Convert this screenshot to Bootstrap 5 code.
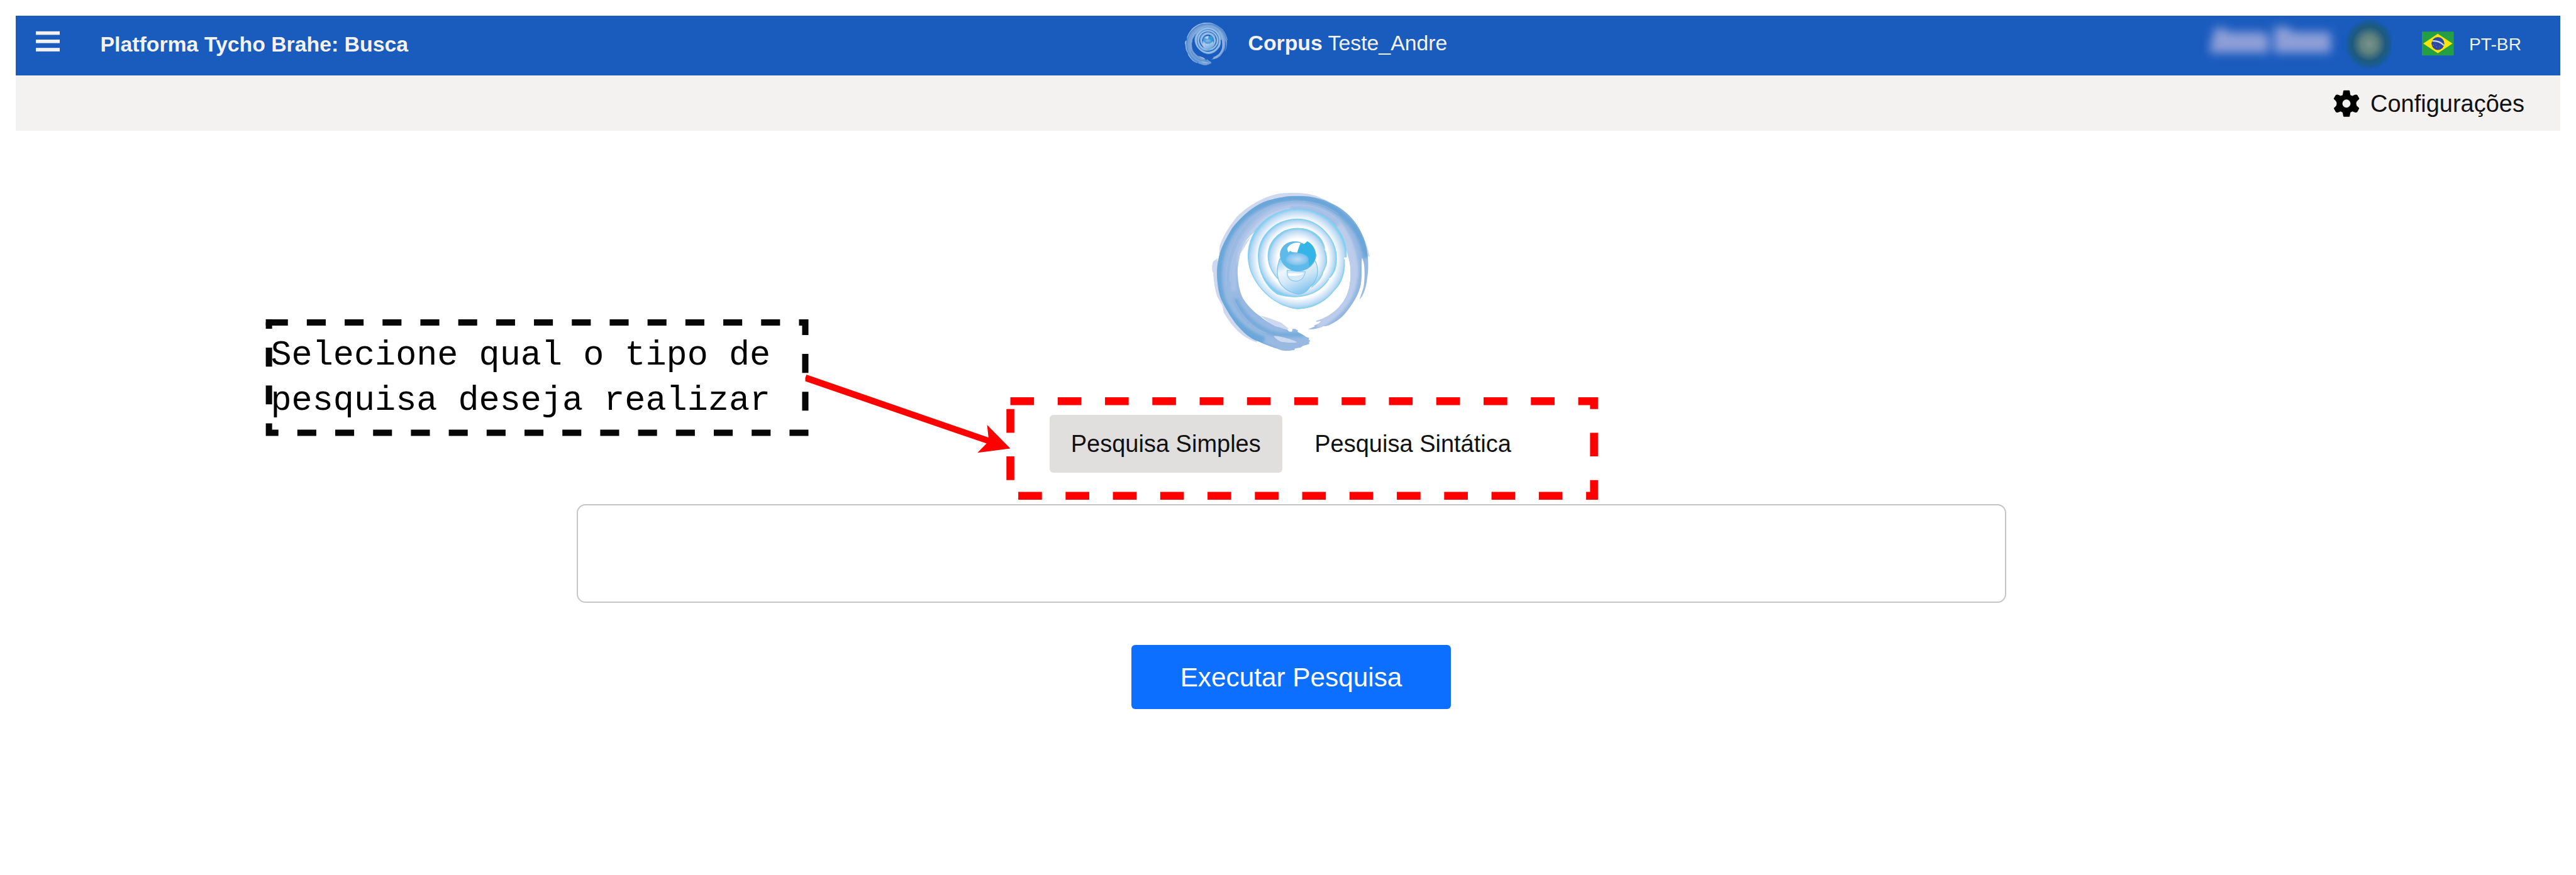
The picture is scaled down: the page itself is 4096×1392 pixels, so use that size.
<!DOCTYPE html>
<html lang="pt-BR">
<head>
<meta charset="utf-8">
<title>Platforma Tycho Brahe: Busca</title>
<link href="https://cdn.jsdelivr.net/npm/bootstrap@5.3.0/dist/css/bootstrap.min.css" rel="stylesheet">
<script src="https://cdn.jsdelivr.net/npm/bootstrap@5.3.0/dist/js/bootstrap.bundle.min.js"></script>
<style>
body{width:4096px;height:1392px;overflow:hidden;font-family:"Liberation Sans",sans-serif;font-size:33.8px;color:#111;background:#fff}
.app-shell{padding:25px 25px 0}
.top-bar{height:95px;background:#1a5bbe;color:#f3f2f1;line-height:40px;padding:0 58px 0 32px}
.top-bar>*{flex-shrink:0}
.menu-icon{width:38px;height:34px;margin-top:-14px}
.brand-title{margin-left:64.5px;margin-top:-5px;width:1720px}
.corpus-group{margin-left:4px}
.corpus-logo{width:68px;height:68px;margin-top:-6px}
.corpus-name{margin-left:33px;margin-top:-9px}
.user-blur{width:360px;height:95px}
.flag-icon{width:50.7px;height:38.5px;margin-left:48px;margin-top:-6px}
.lang-code{font-size:28.2px;margin-left:24px;margin-top:-5px;width:87px}
.sub-bar{height:88.4px;background:#f3f2f1;font-size:38px;line-height:44px;padding:1px 57px 0 0;color:#111}
.gear-icon{width:42px;height:43.5px;margin-right:17px}
.search-main{padding:97.8px 0 0 10px}
.main-logo{width:251.5px;height:253px}
.type-tabs{margin-top:101.3px;height:91.4px;width:768.5px;font-size:38px}
.type-tab{border:0;border-radius:6px;background:transparent;color:#111;padding:0 34.5px 1px;line-height:88px;font-size:38px;white-space:nowrap;flex-shrink:0}
.type-tab.active{background:#e1dfdd;width:370px;padding-left:0;padding-right:0}
.query-box{width:2273px;height:156.4px;margin-top:50.6px;border:2px solid #c8c6c4;border-radius:14px;padding:20px;font-size:38px}
.run-btn{width:507.5px;height:102px;margin-top:67.6px;border-radius:6px;background:#0d6fff;border:0;font-size:42.3px;padding:0}
/* overlay with the tutorial annotations */
.note-layer{left:0;top:0;width:4096px;height:1392px}
.note-text{left:430.5px;top:529.5px;font-family:"Liberation Mono",monospace;font-size:55.18px;line-height:72.6px;color:#000;white-space:pre}
</style>
</head>
<body class="position-relative">
<svg width="0" height="0" class="position-absolute">
<defs>
<filter id="soft" x="-20%" y="-20%" width="140%" height="140%"><feGaussianBlur stdDeviation="9"/></filter>
<filter id="soft2" x="-20%" y="-20%" width="140%" height="140%"><feGaussianBlur stdDeviation="3"/></filter>
<radialGradient id="ring"><stop offset=".79" stop-color="#dcebf9" stop-opacity="0"/><stop offset=".87" stop-color="#dcebf9"/><stop offset=".95" stop-color="#b8d8f2"/><stop offset="1" stop-color="#84cdef"/></radialGradient>
<radialGradient id="ring3"><stop offset=".66" stop-color="#dcebf9" stop-opacity="0"/><stop offset=".8" stop-color="#dcebf9"/><stop offset=".93" stop-color="#b8d8f2"/><stop offset="1" stop-color="#7fcbef"/></radialGradient>
<linearGradient id="egg" x1="0" y1="0" x2=".5" y2="1"><stop offset="0" stop-color="#8cc8ef"/><stop offset=".35" stop-color="#eef6fd"/><stop offset=".65" stop-color="#cfe5f7"/><stop offset="1" stop-color="#85c7ee"/></linearGradient>
<radialGradient id="glow"><stop offset="0" stop-color="#bcdcf5"/><stop offset=".8" stop-color="#85c5ee"/><stop offset="1" stop-color="#6dbdea"/></radialGradient>
<clipPath id="brush"><path d="M800 170 C740 168 620 190 560 215 C450 262 370 350 320 410 C280 475 230 560 213 640 C200 690 196 760 200 800 C205 860 213 930 240 980 C270 1040 300 1090 345 1150 C400 1215 450 1260 520 1285 C580 1315 640 1332 690 1350 C720 1358 760 1354 790 1350 L795 1338 L840 1330 L855 1318 L905 1303 L903 1287 L913 1280 L900 1270 L905 1257 L880 1248 L862 1236 L815 1210 L818 1200 L795 1187 L777 1188 L772 1209 L750 1208 L735 1190 L712 1186 L640 1165 C600 1140 560 1120 530 1090 C480 1060 440 1015 415 980 C375 930 360 840 358 780 C350 700 370 610 410 530 C440 480 470 460 500 430 C570 330 680 270 815 270 C940 275 1050 330 1110 410 C1160 470 1190 580 1205 640 C1230 720 1225 850 1195 920 C1160 1010 1080 1090 960 1125 L957 1132 L996 1128 L975 1148 L940 1162 L948 1170 L895 1190 C940 1192 990 1180 1010 1167 L1030 1167 C1090 1150 1150 1105 1175 1075 C1230 1010 1290 920 1300 840 C1310 780 1300 700 1308 642 C1335 690 1330 800 1320 870 L1290 962 C1320 930 1340 870 1348 800 C1360 720 1358 670 1348 600 C1340 530 1310 460 1280 410 C1240 340 1180 285 1120 250 C1030 195 920 165 800 170Z"/></clipPath>
<symbol id="tycho" viewBox="160 145 1210 1212">
<g fill="#ced9ef" filter="url(#soft2)">
<path d="M690 150 C800 140 900 150 960 170 L1060 215 L940 190 L620 190 L520 245 C400 330 330 400 280 480 L215 620 L220 550 C260 440 320 370 350 330 C450 230 580 165 690 150Z"/>
<path d="M205 645 L170 670 C158 700 158 740 170 760 C175 820 180 880 200 940 L240 1010 L250 1060 C330 1200 410 1260 505 1292 L500 1270 C330 1150 230 980 205 800Z"/>
<path d="M1180 290 C1280 380 1340 500 1368 635 L1345 630 L1300 480Z"/>
<path d="M605 1107 L690 1140 L750 1188 L690 1184 L630 1160 L580 1125 L530 1085Z"/>
<path d="M410 530 L460 475 L375 620 L358 720 L345 700Z"/>
</g>
<g clip-path="url(#brush)">
<rect x="160" y="140" width="1210" height="1220" fill="#98b9e2"/>
<g fill="none" filter="url(#soft)">
<path d="M330 900 C300 600 420 400 600 290 C800 200 1020 260 1120 370 C1230 500 1260 640 1265 780" stroke="#a8c1e7" stroke-width="45"/>
<path d="M375 700 C370 590 420 480 540 370 C620 300 700 285 760 275" stroke="#c1d0ec" stroke-width="36"/>
<path d="M1120 400 C1200 500 1240 640 1240 780 C1230 930 1150 1060 960 1160" stroke="#bccdeb" stroke-width="75"/>
<path d="M640 1360 C330 1260 205 1000 212 760 C215 500 400 200 790 183 C1040 180 1240 340 1310 520 L1345 640" stroke="#69a6d8" stroke-width="50"/>
<path d="M1310 600 C1310 880 1230 1040 1040 1165" stroke="#86b0de" stroke-width="14"/>
<path d="M340 960 C390 1080 500 1180 620 1220 C700 1250 800 1220 860 1235" stroke="#76abda" stroke-width="36"/>
<path d="M230 940 C290 1090 400 1220 560 1270" stroke="#6ba8d9" stroke-width="46"/>
<path d="M420 1000 C480 1080 560 1150 650 1180" stroke="#96b8e2" stroke-width="22"/>
</g>
<g fill="none" filter="url(#soft2)" stroke-width="4" opacity=".45">
<path d="M300 820 C290 600 420 380 640 270 C820 215 980 235 1110 340 C1220 450 1270 590 1280 800" stroke="#c4d5ef"/>
<path d="M270 860 C250 580 390 340 620 240 C820 180 1000 210 1130 310" stroke="#b9cdec"/>
<path d="M330 970 C400 1110 480 1190 580 1220" stroke="#c4d5ef"/>
</g>
</g>
<path d="M632 1242 C680 1240 760 1262 815 1290 C770 1298 730 1290 690 1286 Q650 1270 632 1242Z" fill="#cad9ef" filter="url(#soft2)"/>
<path d="M815 270 C1000 270 1175 420 1190 590 L1184 640 L1170 642 L1178 700 C1175 780 1140 850 1100 885 C1040 970 940 1030 820 1035 C790 1035 770 1028 750 1020 C590 975 440 810 437 630 C440 420 610 270 815 270Z" fill="url(#ring)"/>
<path d="M815 347 C980 350 1113 500 1113 650 C1110 700 1100 760 1060 796 C1020 880 930 943 790 943 C750 943 700 938 660 920 C570 860 515 750 515 630 C515 470 650 347 815 347Z" fill="url(#ring)"/>
<path d="M815 418 C920 418 1010 480 1022 575 L1030 595 C1050 660 1035 700 1020 730 C990 820 920 890 810 890 C690 860 590 760 590 630 C590 510 690 418 815 418Z" fill="url(#ring3)"/>
<g fill="none" stroke="#84d0f0" stroke-width="7" filter="url(#soft2)">
<path d="M1187 640 C1200 420 1000 270 815 270 C610 270 440 420 437 630 C440 810 590 975 750 1020 C770 1028 790 1033 820 1033 C940 1030 1040 970 1100 885 C1140 850 1175 780 1173 655"/>
<path d="M1060 796 C1100 760 1113 700 1113 650 C1113 500 980 347 815 347 C650 347 515 470 515 630 C515 750 570 860 660 920 C800 965 970 940 1055 805"/>
<path d="M1022 575 C1010 480 920 418 815 418 C690 418 590 510 590 630 C590 710 630 770 690 830 M1022 590 C1055 680 1030 710 1010 750 C1000 800 960 840 920 870"/>
</g>
<path d="M680 650 C645 740 660 820 700 860 C735 900 780 915 820 922 C870 920 895 890 915 860 C950 830 970 790 968 740 C968 700 955 675 945 660Z" fill="url(#egg)" stroke="#7bc6ec" stroke-width="6"/>
<path d="M735 740 L738 780 Q755 822 800 822 Q862 820 875 750Z" fill="#d3e8f8" stroke="#8ccdef" stroke-width="6"/>
<path d="M740 762 L862 762 Q820 790 745 780Z" fill="#fff" filter="url(#soft2)"/>
<path d="M835 522 C740 500 680 555 680 625 C685 690 745 747 818 748 C895 745 957 690 957 622 C950 575 925 535 890 518 L865 538 L848 530Z" fill="#5dbae9"/>
<path d="M815 610 C820 570 835 550 848 535 L866 540 L890 518 C940 545 955 590 957 625 C950 670 925 690 900 710 C915 660 880 620 815 610Z" fill="#34b4e8" filter="url(#soft2)"/>
<ellipse cx="812" cy="655" rx="88" ry="48" fill="url(#glow)" filter="url(#soft2)"/>
<path d="M735 575 C750 535 800 520 838 530 C825 560 820 580 812 603 L775 600 L758 590 L745 602 Z" fill="#fff" filter="url(#soft2)"/>
</symbol>
</defs>
</svg>

<div class="app-shell">
  <nav class="top-bar d-flex align-items-center">
    <svg class="menu-icon" viewBox="0 0 38 34" fill="#f3f2f1"><rect y=".8" width="38" height="5.6"/><rect y="14" width="38" height="5.6"/><rect y="27.2" width="38" height="5.6"/></svg>
    <div class="brand-title fw-bold">Platforma Tycho Brahe: Busca</div>
    <div class="corpus-group d-flex align-items-center me-auto">
      <svg class="corpus-logo" opacity=".72"><use href="#tycho"/></svg>
      <div class="corpus-name"><b>Corpus</b> Teste_Andre</div>
    </div>
    <!-- user name and avatar, blurred for privacy -->
    <svg class="user-blur" viewBox="3443 25 360 95">
      <defs><filter id="hide" x="-30%" y="-60%" width="160%" height="220%"><feGaussianBlur stdDeviation="7.5"/></filter><radialGradient id="ava"><stop offset="0" stop-color="#78918c"/><stop offset=".3" stop-color="#5f827e"/><stop offset=".62" stop-color="#1f5a7c"/><stop offset=".8" stop-color="#185b98"/><stop offset="1" stop-color="#1a5bbe" stop-opacity="0"/></radialGradient></defs>
      <g fill="#8d9fd8" filter="url(#hide)"><path d="M3513 84 L3521 45 H3537 L3544 51 H3594 L3607 54 V84Z"/><path d="M3616 84 V43 H3638 L3646 51 H3706 V84Z"/></g>
      <ellipse cx="3767" cy="70" rx="42" ry="44" fill="url(#ava)"/>
    </svg>
    <svg class="flag-icon" viewBox="0 0 243 182"><rect width="243" height="182" fill="#249f43"/><path d="M10 91 L121 17 L233 91 L121 165Z" fill="#f9e50c"/><circle cx="122" cy="91" r="49" fill="#2f47a0"/><path d="M78 72 Q130 66 168 105" fill="none" stroke="#c6e0e2" stroke-width="10"/><g fill="#6b7cbd"><circle cx="86" cy="104" r="5"/><circle cx="105" cy="96" r="3"/><circle cx="111" cy="117" r="4"/><circle cx="134" cy="111" r="3"/><circle cx="133" cy="126" r="3"/></g></svg>
    <div class="lang-code">PT-BR</div>
  </nav>
  <div class="sub-bar d-flex align-items-center justify-content-end">
    <svg class="gear-icon" viewBox="78 53 200 208"><path fill="#000" fill-rule="evenodd" d="M160 57H198Q202 57 203 62L208 92L223 98L242 90Q252 87 260 91L276 119Q274 126 265 132Q252 142 252 157Q252 172 265 182Q274 189 275 194L260 222Q252 228 242 224L223 217L208 225L203 253Q202 258 198 258H160Q155 258 154 253L149 225L134 217L115 224Q105 228 97 222L82 194Q83 189 92 182Q104 172 104 157Q104 142 92 132Q83 126 81 119L97 91Q105 87 115 90L134 98L149 92L154 62Q155 57 160 57ZM178 126A31 31 0 1 0 178 188A31 31 0 1 0 178 126Z"/></svg>
    <span>Configurações</span>
  </div>
  <main class="search-main d-flex flex-column align-items-center">
    <svg class="main-logo"><use href="#tycho"/></svg>
    <div class="type-tabs d-flex">
      <button class="type-tab active">Pesquisa Simples</button>
      <button class="type-tab" style="margin-left:17px">Pesquisa Sintática</button>
    </div>
    <input class="query-box" type="text" aria-label="Pesquisa">
    <button class="run-btn btn btn-primary">Executar Pesquisa</button>
  </main>
</div>

<div class="note-layer position-absolute">
  <svg class="position-absolute top-0 start-0" width="4096" height="1392" viewBox="0 0 6532 2220" preserveAspectRatio="none">
    <path d="M682 818H2042V1098H682V818" fill="none" stroke="#070707" stroke-width="16" stroke-dasharray="48 48"/>
    <rect x="674" y="810" width="16" height="16" fill="#070707"/>
    <path d="M2562 1018H4042V1258H2562V1018" fill="none" stroke="#f00" stroke-width="20" stroke-dasharray="60 60"/>
    <path fill="#f00" d="M2045 950.5L2506.5 1110L2503 1078.3L2562 1138L2478.5 1148.7L2501.6 1125.3L2042 967.2V958Z"/>
  </svg>
  <div class="note-text position-absolute">Selecione qual o tipo de
pesquisa deseja realizar</div>
</div>
</body>
</html>
